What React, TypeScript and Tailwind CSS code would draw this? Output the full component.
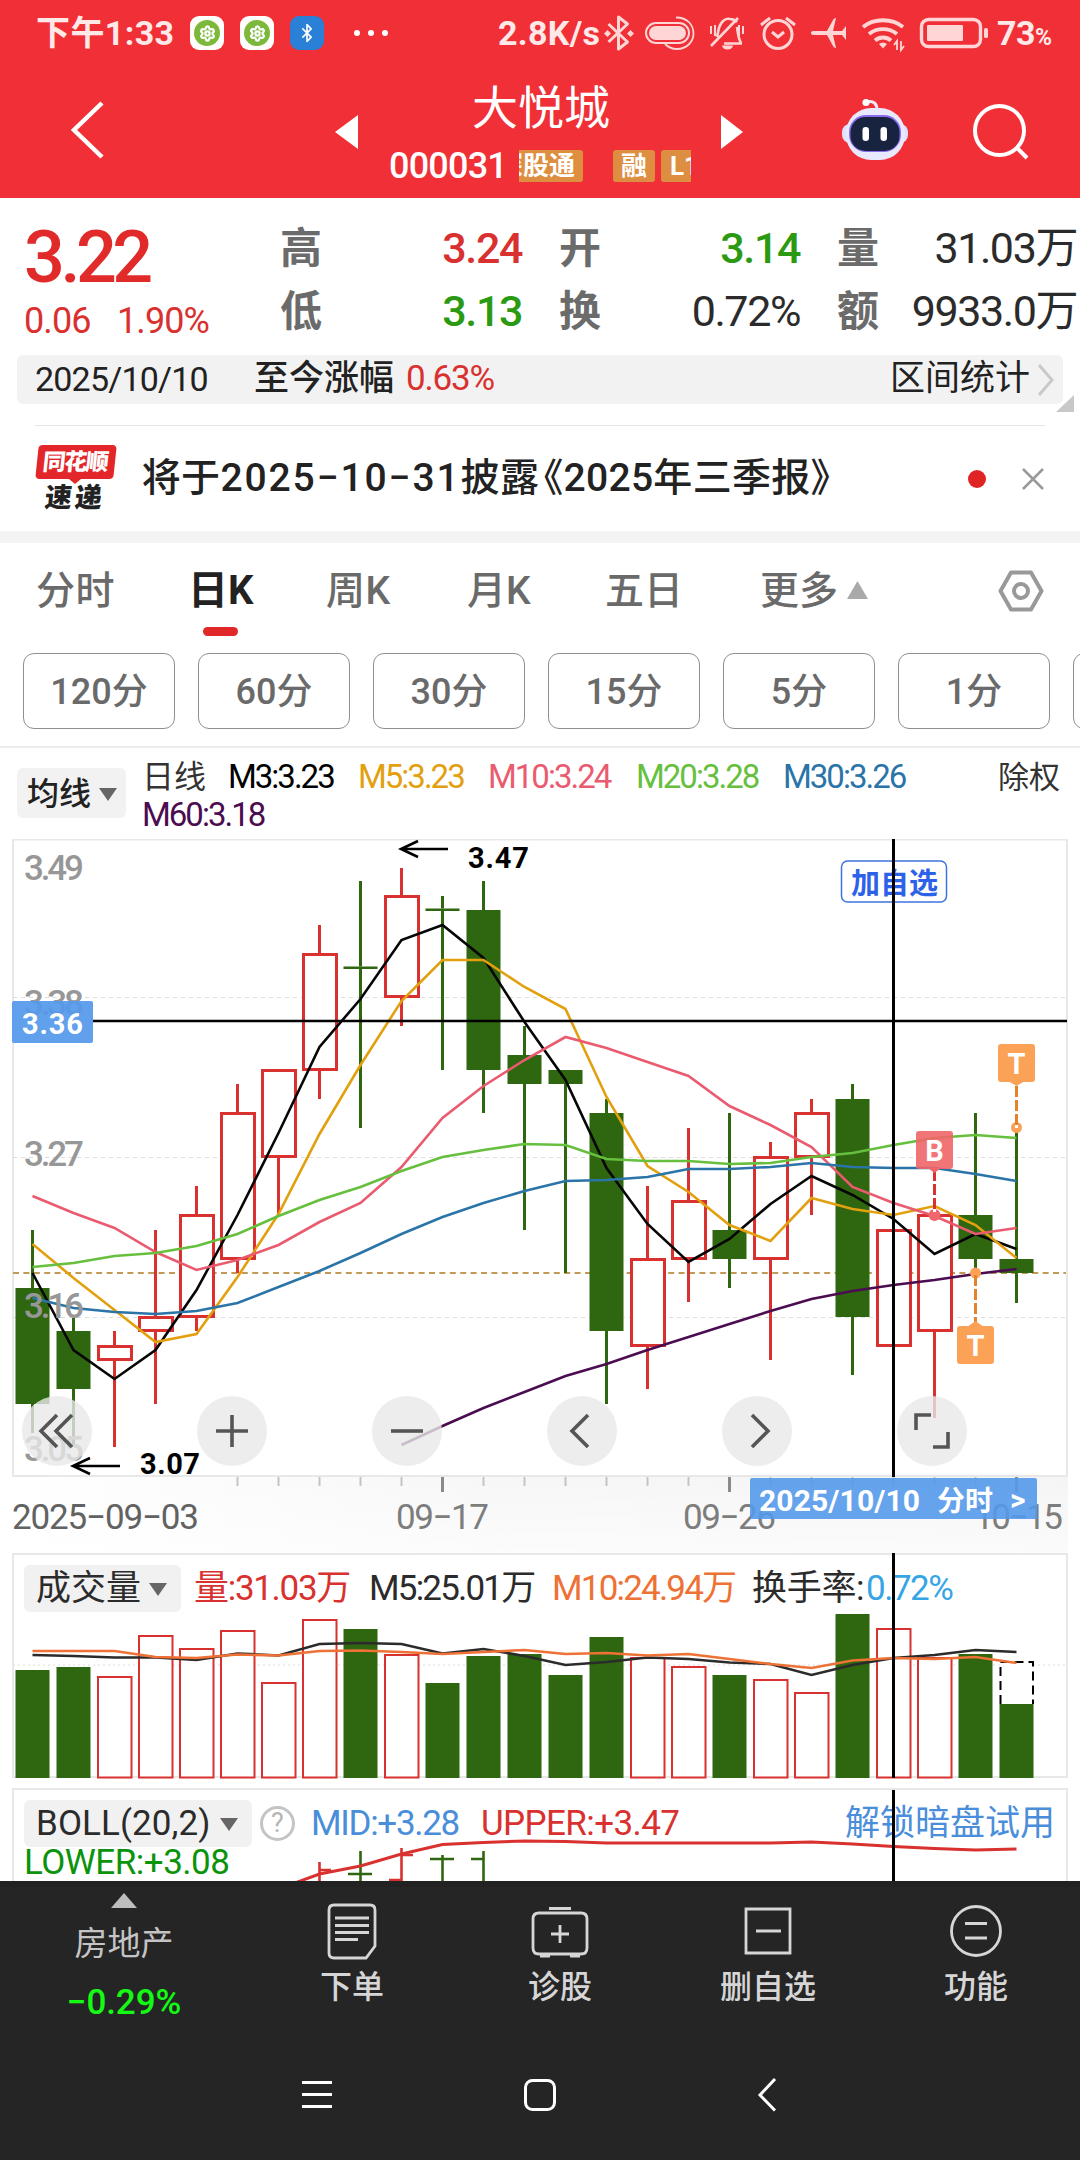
import { Bluetooth, Settings } from 'lucide-react';

const RED = '#d8312f';
const GREEN = '#2f6610';

// [up, high, bodyTop, bodyBottom, low]
const candles: [boolean, number, number, number, number][] = [
  [false, 1230, 1288, 1404, 1433],
  [false, 1318, 1331, 1389, 1447],
  [true, 1331, 1345, 1361, 1447],
  [true, 1230, 1316, 1332, 1404],
  [true, 1186, 1214, 1318, 1331],
  [true, 1084, 1112, 1260, 1273],
  [true, 1069, 1069, 1158, 1215],
  [true, 925, 953, 1071, 1099],
  [false, 881, 966.5, 969, 1128],
  [true, 868, 895, 998, 1026],
  [false, 896, 908.5, 911, 1070],
  [false, 881, 910, 1070, 1113],
  [false, 1026, 1055, 1084, 1230],
  [false, 1070, 1070, 1084, 1273],
  [false, 1099, 1113, 1331, 1404],
  [true, 1186, 1258, 1347, 1389],
  [true, 1128, 1200, 1260, 1302],
  [false, 1113, 1230, 1259, 1288],
  [true, 1142, 1156, 1260, 1360],
  [true, 1099, 1112, 1158, 1215],
  [false, 1084, 1099, 1317, 1375],
  [true, 1229, 1229, 1347, 1347],
  [true, 1214, 1214, 1332, 1418],
  [false, 1113, 1215, 1259, 1273],
  [false, 1128, 1259, 1273, 1303],
];

const averages = [
  { color: '#4b0c50', start: 9, ys: [1445, 1426, 1408, 1392, 1376, 1364, 1350, 1337, 1324, 1311, 1299, 1291, 1285, 1280, 1274, 1269] },
  { color: '#060606', start: 0, ys: [1273, 1350, 1379, 1350, 1290, 1215, 1133, 1047, 999, 940, 925, 958, 1022, 1080, 1168, 1224, 1262, 1239, 1204, 1176, 1195, 1219, 1254, 1234, 1249] },
  { color: '#e2a00f', start: 0, ys: [1244, 1278, 1310, 1342, 1334, 1277, 1214, 1134, 1065, 1001, 960, 960, 987, 1009, 1097, 1166, 1192, 1225, 1241, 1198, 1209, 1215, 1206, 1225, 1258] },
  { color: '#ea5b70', start: 0, ys: [1196, 1213, 1228, 1252, 1270, 1260, 1245, 1222, 1203, 1167, 1118, 1086, 1060, 1037, 1048, 1062, 1076, 1106, 1125, 1147, 1187, 1203, 1216, 1234, 1228] },
  { color: '#66bf3d', start: 0, ys: [1267, 1263, 1256, 1253, 1246, 1234, 1216, 1200, 1187, 1171, 1157, 1150, 1144, 1145, 1159, 1161, 1161, 1164, 1163, 1157, 1153, 1145, 1138, 1135, 1138] },
  { color: '#2a74a8', start: 0, ys: [1298, 1308, 1312, 1314, 1311, 1303, 1287, 1271, 1253, 1234, 1217, 1203, 1191, 1181, 1180, 1177, 1169, 1169, 1167, 1163, 1167, 1168, 1168, 1174, 1181] },
];

const volumes = [
  [0, 1670], [0, 1667], [1, 1676], [1, 1635], [1, 1648], [1, 1630], [1, 1682], [1, 1619], [0, 1629],
  [1, 1654], [0, 1683], [0, 1656], [0, 1654], [0, 1675], [0, 1637], [1, 1657], [1, 1666], [0, 1675],
  [1, 1679], [1, 1692], [0, 1614], [1, 1628], [1, 1657], [0, 1654], [0, 1704],
];
const volumeM5 = [1655, 1656, 1657.5, 1657.5, 1660, 1653.5, 1655.5, 1644, 1643, 1644, 1653.5, 1649, 1656, 1665, 1662, 1657.5, 1659, 1662.5, 1664, 1675, 1665, 1658, 1655, 1650, 1652];
const volumeM10 = [1651, 1651, 1651, 1657, 1658, 1654.5, 1655.5, 1651, 1650.5, 1652, 1654, 1652, 1650, 1654, 1653, 1655.5, 1654, 1659, 1664, 1668, 1660.5, 1658, 1659, 1657, 1663];
const bollUpper = [1890, 1875, 1867, 1855, 1845.5, 1843.5, 1842, 1842.5, 1844, 1844, 1844, 1844, 1844, 1843, 1845, 1847.5, 1849.5, 1851, 1850];

const x = (i: number) => 32.5 + i * 41;
const line = (ys: number[], start = 0) => ys.map((y, i) => `${x(start + i)},${y}`).join(' ');

const periods = ['120分', '60分', '30分', '15分', '5分', '1分'];

const GearTile = () => (
  <div className="flex h-[34px] w-[34px] items-center justify-center rounded-[9px] bg-white">
    <div className="flex h-[26px] w-[26px] items-center justify-center rounded-full bg-[#7cb93a]">
      <Settings className="h-[17px] w-[17px] text-white" strokeWidth={3.2} />
    </div>
  </div>
);

const StatusBar = () => (
  <div className="flex h-[66px] items-center pl-[36px] text-[#ffe9e8]">
    <span className="w-[154px] whitespace-nowrap text-[34px] font-bold tracking-[0.4px]">下午1:33</span>
    <GearTile />
    <div className="w-4" />
    <GearTile />
    <div className="ml-4 flex h-[34px] w-[34px] items-center justify-center rounded-[9px] bg-[#2a7fd6]">
      <Bluetooth className="h-[20px] w-[20px] text-white" strokeWidth={2} />
    </div>
    <div className="ml-[30px] flex w-[144px] gap-2">
      <i className="h-[6px] w-[6px] rounded-full bg-white" />
      <i className="h-[6px] w-[6px] rounded-full bg-white" />
      <i className="h-[6px] w-[6px] rounded-full bg-white" />
    </div>
    <span className="w-[106px] whitespace-nowrap text-[34px] font-bold tracking-[0.3px]">2.8K/s</span>
    <svg width="446" height="66" viewBox="604 0 446 66" fill="none" stroke="#ffd6d5" strokeWidth="3">
      <path d="M608.500 24l19 18-9 7V17l9 7-19 18" strokeLinejoin="round" />
      <path d="M604 33.500l3.500-3.500 3.500 3.500-3.500 3.500zM627 33.500l3.500-3.500 3.500 3.500-3.500 3.500z" fill="#ffd6d5" stroke="none" />
      <rect x="646" y="23" width="43" height="20" rx="10" strokeWidth="2" />
      <rect x="649" y="26" width="37" height="14" rx="7" fill="#ffd6d5" stroke="none" />
      <path d="M676 17.500c12 0 17.500 8 17.500 16S687 49 677 49c-6 0-10-3-12-5" strokeWidth="1.800" />
      <path d="M717 37c1-3 1-6 2-9 2-7 7-10 11-9 3 0 5 1 7 3M737 27c1 6 1 11 4 16M724 43.500h18M711 46l27-28" strokeWidth="2.600" />
      <path d="M722 45.500h11a5.500 4 0 0 1-11 0z" fill="#ffd6d5" stroke="none" />
      <path d="M711 26v8M715 25v11M739 25v11M743 26v8" strokeWidth="2" />
      <circle cx="778" cy="34.500" r="14" />
      <path d="M772 32l6 5 6-5M761 25l9-7M795 25l-9-7" />
      <path d="M811 33c0-1.500 1-2 3-2h13l6-11c1-2 3-2 3-2l-3 13h9l4-5v14l-4-5h-9l3 13s-2 0-3-2l-6-11h-13c-2 0-3-.500-3-2z" fill="#ffd6d5" stroke="none" />
      <path d="M863 27c11-9 29-9 40 0M869 34c8-6.500 20-6.500 28 0M875 40.500c4.500-4 11.500-4 16 0" strokeWidth="3.800" />
      <path d="M879 44a6 6 0 0 1 8 0l-4 4.500z" fill="#ffd6d5" stroke="none" />
      <path d="M897 50v-9l-3 4M901 41v9l3-4" strokeWidth="1.800" />
      <rect x="921.500" y="19.500" width="59" height="27" rx="7" strokeWidth="3.400" />
      <rect x="927" y="25" width="36" height="16" rx="1" fill="#ffd6d5" stroke="none" />
      <rect x="984" y="28" width="4" height="10" rx="1.500" fill="#ffd6d5" stroke="none" />
    </svg>
    <span className="-ml-[53px] whitespace-nowrap text-[34px] font-bold tracking-[-0.5px]">
      73<span className="text-[23px]">%</span>
    </span>
  </div>
);

const Header = () => (
  <header className="h-[198px] bg-[#f02f36]">
    <StatusBar />
    <div className="flex h-[132px] items-start text-white">
      <svg className="ml-[68px] mt-[34px]" width="40" height="60" fill="none" stroke="#fff" strokeWidth="4.500">
        <path d="M34 3L6 30L34 57" />
      </svg>
      <svg className="ml-[227px] mt-[49px]" width="24" height="34" fill="#fff"><path d="M23 0v34L0 17z" /></svg>
      <div className="ml-[30px] flex w-[304px] flex-col items-center">
        <div className="mt-[14px] h-[56px] w-[304px] text-center text-[46px] leading-[56px]">大悦城</div>
        <div className="mt-[12px] flex h-9 w-[304px] items-center">
          <span className="w-[130px] text-[36px] font-medium leading-[36px] tracking-[-0.8px]">000031</span>
          <div className="flex h-[32px] w-[172px] justify-end gap-[6px] overflow-hidden text-[26px] font-bold leading-[32px]">
            <span className="flex h-[32px] w-[64px] shrink-0 justify-end overflow-hidden rounded-r-[3px] bg-[#dd8e41] pr-[8px] whitespace-nowrap">深股通</span>
            <span className="ml-6 h-[32px] w-[42px] shrink-0 rounded-[3px] bg-[#dd8e41] text-center">融</span>
            <span className="h-[32px] w-[30px] shrink-0 overflow-hidden rounded-l-[3px] bg-[#dd8e41] pl-[9px]">L1</span>
          </div>
        </div>
      </div>
      <svg className="ml-[28px] mt-[49px]" width="24" height="34" fill="#fff"><path d="M0 0v34L22 17z" /></svg>
      <svg className="ml-[95px] mt-[32px]" width="70" height="64" viewBox="840 98 70 64">
        <path d="M866 102c8-2 11 2 11 8" fill="none" stroke="#f6e8f6" strokeWidth="3" />
        <circle cx="866" cy="102.500" r="3.600" fill="#fff" />
        <rect x="842" y="124" width="66" height="19" rx="8" fill="#dfe0fb" />
        <rect x="846" y="108" width="59" height="52" rx="25" fill="#e9e9fd" />
        <rect x="849" y="115" width="52" height="37" rx="17" fill="#8a6bf0" />
        <rect x="850.500" y="117" width="49" height="34" rx="15" fill="#18233f" />
        <rect x="862.500" y="127" width="6.500" height="14" rx="3.200" fill="#fff" />
        <rect x="880.500" y="127" width="6.500" height="14" rx="3.200" fill="#fff" />
      </svg>
      <svg className="ml-[60px] mt-[35px]" width="64" height="62" fill="none" stroke="#fff" strokeWidth="4">
        <circle cx="29.500" cy="29.500" r="24.500" />
        <path d="M46 46l11 11" />
      </svg>
    </div>
  </header>
);

const Stat = ({ label, value, color }: { label: string; value: string; color: string }) => (
  <div className="flex items-center justify-between whitespace-nowrap">
    <span className="text-[42px] font-bold text-[#6b6b6b]">{label}</span>
    <span className={`text-[43px] tracking-[-1.4px] ${color}`}>{value}</span>
  </div>
);

const Quote = () => (
  <section className="h-[228px]">
    <div className="flex h-[157px]">
      <div className="w-[280px] pl-[24px]">
        <div className="mt-[24px] h-[72px] text-[72px] font-medium leading-[72px] tracking-[-4.5px] text-[#e12b2b]">3.22</div>
        <div className="mt-[8px] flex text-[36px] leading-[38px] tracking-[-0.9px] text-[#d8312f]">
          <span className="w-[93px]">0.06</span>
          <span>1.90%</span>
        </div>
      </div>
      <div className="mt-[19px] grid h-[126px] w-[798px] grid-cols-[242px_241px_240px] grid-rows-2 gap-x-[37px] font-medium">
        <Stat label="高" value="3.24" color="text-[#d8312f]" />
        <Stat label="开" value="3.14" color="text-[#2b9a12]" />
        <Stat label="量" value="31.03万" color="text-[#2b2b2b] font-normal" />
        <Stat label="低" value="3.13" color="text-[#2b9a12]" />
        <Stat label="换" value="0.72%" color="text-[#2b2b2b] font-normal" />
        <Stat label="额" value="9933.0万" color="text-[#2b2b2b] font-normal" />
      </div>
    </div>
    <div className="ml-[17px] flex h-[49px] w-[1046px] items-center rounded-[6px] bg-[#f2f2f2] pl-[18px] text-[34px] text-[#222]">
      <span className="w-[219px] tracking-[-0.8px]">2025/10/10</span>
      <span className="w-[152px] text-[35px] font-medium">至今涨幅</span>
      <span className="w-[484px] text-[35px] tracking-[-1.2px] text-[#d8312f]">0.63%</span>
      <span className="w-[140px] whitespace-nowrap text-[35px]">区间统计</span>
      <svg className="ml-[6px]" width="20" height="36" fill="none" stroke="#c9c9c9" strokeWidth="3"><path d="M3 3l13 15L3 33" /></svg>
    </div>
    <svg className="-mt-[9px] ml-[1056px]" width="18" height="17" fill="#c8c8c8"><path d="M18 0v17H0z" /></svg>
  </section>
);

const News = () => (
  <section className="flex h-[105px] items-center px-[35px]">
    <div className="-mt-px flex w-[107px] flex-col">
      <div className="ml-[2px] flex h-[34px] w-[78px] -skew-x-6 items-center justify-center rounded-[4px] bg-[#e2262a] pr-[2px] text-[23px] font-black leading-none tracking-[-1.5px] text-white">
        同花顺
      </div>
      <svg className="ml-[34px]" width="12" height="5" fill="#e2262a"><path d="M0 0h12L6 5z" /></svg>
      <div className="ml-[10px] -skew-x-6 text-[27px] font-black leading-[28px] tracking-[3px] text-[#222]">速递</div>
    </div>
    <span className="w-[828px] whitespace-nowrap text-[39px] font-medium tracking-[0.3px] text-[#222]">
      将于<span className="tracking-[1.9px]">2025−10−31</span>披露
      <span className="-ml-[15px]">《2025年三季报》</span>
    </span>
    <i className="h-[18px] w-[18px] shrink-0 rounded-full bg-[#e02424]" />
    <svg className="ml-[35px] shrink-0" width="24" height="24" fill="none" stroke="#999" strokeWidth="2.500"><path d="M2 2l20 20M22 2L2 22" /></svg>
  </section>
);

const Tabs = () => (
  <nav className="flex h-[110px] items-start whitespace-nowrap pl-[36px] pt-[23px] text-[39px] font-medium leading-[50px] text-[#6a6a6a]">
    <span className="w-[152px] tracking-[0.6px]">分时</span>
    <span className="flex w-[138px] flex-col font-bold text-[#222]">
      <span className="text-[40px]">日K</span>
      <i className="ml-[15px] mt-[11px] h-[9px] w-[35px] rounded-full bg-[#e02828]" />
    </span>
    <span className="w-[141px] tracking-[0.6px]">周K</span>
    <span className="w-[138px]">月K</span>
    <span className="w-[155px]">五日</span>
    <span className="w-[87px]">更多</span>
    <svg className="mt-[15px]" width="21" height="18" fill="#a9a9a9"><path d="M10.500 0l10.500 18H0z" /></svg>
    <svg className="ml-[129px]" width="48" height="50" viewBox="0 0 48 50" fill="none" stroke="#999" strokeWidth="4">
      <path d="M14 6.500h20L44.500 25 34 43.500H14L3.500 25z" strokeLinejoin="round" />
      <circle cx="24" cy="25" r="7" />
    </svg>
  </nav>
);

const Periods = () => (
  <div className="flex h-[95px] gap-[23px] overflow-hidden border-b-2 border-[#ececec] pl-[23px]">
    {periods.map((p) => (
      <div key={p} className="flex h-[76px] w-[152px] shrink-0 items-center justify-center rounded-[11px] border border-[#8f8f8f] pt-[2px] text-[36px] font-medium text-[#6a6a6a]">
        {p}
      </div>
    ))}
    <div className="h-[76px] w-[152px] shrink-0 rounded-[11px] border border-[#8f8f8f]" />
  </div>
);

const Down = () => <svg width="18" height="13" fill="#666"><path d="M0 0h18L9 13z" /></svg>;

const Legend = () => (
  <div className="flex h-[91px] pl-[17px] text-[33px] leading-[38px]">
    <div className="mt-[20px] flex h-[50px] w-[109px] items-center gap-[8px] rounded-[6px] bg-[#f2f2f2] pl-[10px] pt-[2px] text-[32px] font-medium text-[#222]">
      均线<Down />
    </div>
    <div className="ml-[16px] mt-[10px] w-[856px] whitespace-nowrap tracking-[-2px]">
      <div className="flex h-[38px]">
        <span className="w-[86px] text-[32px] tracking-normal text-[#333]">日线</span>
        <span className="w-[130px] text-black">M3:3.23</span>
        <span className="w-[130px] text-[#e2a00f]">M5:3.23</span>
        <span className="w-[148px] text-[#ea5b70]">M10:3.24</span>
        <span className="w-[147px] text-[#66bf3d]">M20:3.28</span>
        <span className="text-[#2a74a8]">M30:3.26</span>
      </div>
      <div className="text-[#4b0c50]">M60:3.18</div>
    </div>
    <span className="mt-[11px] whitespace-nowrap text-[31px] text-[#333]">除权</span>
  </div>
);

const Marker = ({ cx, top, letter, color }: { cx: number; top: number; letter: string; color: string }) => (
  <g>
    <rect x={cx - 18.500} y={top} width="37" height="38" rx="3" fill={color} />
    <text x={cx} y={top + 29.500} textAnchor="middle" fontSize="29" fontWeight="700" fill="#fff">{letter}</text>
  </g>
);

const Stem = ({ cx, from, to, color }: { cx: number; from: number; to: number; color: string }) => (
  <g strokeWidth="3">
    <path d={`M${cx} ${from}V${to}`} stroke="#fff" />
    <path d={`M${cx} ${from}V${to}`} stroke={color} strokeDasharray="11 3" />
  </g>
);

const Round = ({ cx, d }: { cx: number; d: string }) => (
  <g>
    <circle cx={cx} cy="1431" r="35" fill="#e9e9e9" opacity="0.8" />
    <path d={d} transform={`translate(${cx} 1431)`} fill="none" stroke="#555" strokeWidth="3.600" />
  </g>
);

const PriceChart = () => (
  <svg className="block" width="1080" height="714" viewBox="0 839 1080 714">
    <defs>
      <linearGradient id="axis" x1="0" x2="1" y1="0" y2="0">
        <stop offset="0" stopColor="#fff" />
        <stop offset="0.450" stopColor="#f7f7f7" />
        <stop offset="1" stopColor="#f5f5f5" />
      </linearGradient>
      <linearGradient id="axisFade" x1="0" x2="0" y1="0" y2="1">
        <stop offset="0" stopColor="#fff" stopOpacity="0" />
        <stop offset="1" stopColor="#fff" stopOpacity="0.600" />
      </linearGradient>
    </defs>
    <rect x="13" y="1477" width="1055" height="76" fill="url(#axis)" />
    <rect x="13" y="1477" width="1055" height="76" fill="url(#axisFade)" />
    <rect x="13" y="839.500" width="1054" height="636.500" fill="none" stroke="#e8e8e8" strokeWidth="2" />
    {[997.5, 1157.5, 1317.5].map((y) => (
      <path key={y} d={`M13 ${y}H1066`} stroke="#dcdcdc" strokeDasharray="4 4" />
    ))}
    <path d="M13 1273H1066" stroke="#c29a55" strokeWidth="1.800" strokeDasharray="6 4.400" />

    {candles.map(([up, high, top, bottom, low], i) => (
      <g key={i} stroke={up ? RED : GREEN}>
        <path d={`M${x(i)} ${high}V${top}M${x(i)} ${bottom}V${low}`} strokeWidth="3" />
        {up ? (
          <rect x={x(i) - 16} y={top + 1.5} width="33" height={bottom - top - 3} fill="#fff" strokeWidth="3" />
        ) : (
          <rect x={x(i) - 17} y={top} width="34" height={bottom - top} fill={GREEN} stroke="none" />
        )}
      </g>
    ))}

    {averages.map((ma) => (
      <polyline key={ma.color} points={line(ma.ys, ma.start)} fill="none" stroke={ma.color} strokeWidth="2.600" />
    ))}

    <g fontSize="35" fill="#979797" fontWeight="500">
      <text x="24" y="880" textLength="60">3.49</text>
      <text x="24" y="1015" textLength="60">3.38</text>
      <text x="24" y="1166" textLength="60">3.27</text>
      <text x="24" y="1318" textLength="60">3.16</text>
      <text x="24" y="1461" textLength="60">3.05</text>
    </g>

    {/* extremes */}
    <g fill="none" stroke="#000" strokeWidth="2.600">
      <path d="M448 849H401M418 841L401 849L418 857" />
      <path d="M120 1466H73M90 1458L73 1466L90 1474" />
    </g>
    <g fontSize="29" fontWeight="700">
      <text x="468" y="868" textLength="61">3.47</text>
      <text x="140" y="1474" textLength="60">3.07</text>
    </g>

    {/* trade markers */}
    <circle cx="934.500" cy="1215" r="6" fill="#f0676c" />
    <Stem cx={934.5} from={1170} to={1212} color={RED} />
    <path d="M928 1168h13l-6.500 5z" fill="#ef6568" />
    <Marker cx={934.5} top={1131} letter="B" color="#ef6568e6" />
    <circle cx="975.500" cy="1273" r="5.500" fill="#fba257" />
    <Stem cx={975.5} from={1275} to={1322} color="#e5832c" />
    <path d="M967 1327l8.500-6 8.500 6z" fill="#fba257" />
    <Marker cx={975.5} top={1326} letter="T" color="#fba257" />
    <circle cx="1016.500" cy="1127.500" r="5.500" fill="#fba257" />
    <Stem cx={1016.5} from={1086} to={1128} color="#e5832c" />
    <path d="M1008 1081h17l-8.500 5z" fill="#fba257" />
    <Marker cx={1016.5} top={1044} letter="T" color="#fba257" />

    <rect x="841.500" y="861" width="105" height="41" rx="6" fill="#fff" stroke="#3f74de" strokeWidth="1.500" />
    <text x="851" y="894" fontSize="29" fontWeight="700" fill="#2d62e8" textLength="87">加自选</text>

    <Round cx={57} d="M0-16L-16 0L0 16M15-16L-1 0L15 16" />
    <Round cx={232} d="M-16 0H16M0-16V16" />
    <Round cx={407} d="M-16 0H16" />
    <Round cx={582} d="M6-16L-10 0L6 16" />
    <Round cx={757} d="M-5-16L11 0L-5 16" />
    <Round cx={932} d="M-1-16H-16V-1M1 16H16V1" />

    <path d="M93 1021H1067" stroke="#000" strokeWidth="2.600" />
    <path d="M893.500 838V1477" stroke="#000" strokeWidth="3" />
    <rect x="12" y="1001" width="81" height="42" rx="2" fill="#5599eb" opacity="0.930" />
    <text x="22" y="1034" fontSize="29" fontWeight="700" fill="#fff" textLength="61">3.36</text>

    {Array.from({ length: 20 }, (_, k) => k + 5).map((i) => {
      const major = i === 10 || i === 17 || i === 24;
      return <path key={i} d={`M${x(i)} 1477V${major ? 1492 : 1486}`} stroke={major ? '#8a8a8a' : '#c4c4c4'} strokeWidth={major ? 3 : 2} />;
    })}
    <g fontSize="35" fill="#7d7d7d">
      <text x="12" y="1529" fill="#626262" textLength="187">2025−09−03</text>
      <text x="396" y="1529" textLength="93">09−17</text>
      <text x="683" y="1529" textLength="93">09−26</text>
      <text x="974" y="1529" textLength="89">10−15</text>
    </g>
    <rect x="750" y="1478" width="287" height="41" rx="2" fill="#5599eb" opacity="0.900" />
    <g fontSize="30" fontWeight="700" fill="#fff">
      <text x="759" y="1511" textLength="161">2025/10/10</text>
      <text x="937" y="1511" fontSize="28" textLength="56">分时</text>
      <text x="1010" y="1510">&gt;</text>
    </g>
  </svg>
);

const Volume = () => (
  <section className="relative ml-[12px] h-[225px] w-[1056px] border-2 border-[#e8e8e8]">
    <div className="mt-[10px] flex h-[47px] items-center whitespace-nowrap pl-[10px] text-[35px] tracking-[-1.8px] text-[#2b2b2b]">
      <div className="flex h-[47px] w-[157px] items-center gap-[8px] rounded-[6px] bg-[#f1f1f1] pl-[12px] pt-[2px] tracking-normal">
        成交量<Down />
      </div>
      <span className="ml-[13px] w-[175px] pt-[2px] tracking-[-1.3px] text-[#d8312f]">量:31.03万</span>
      <span className="w-[183px] pt-[2px]">M5:25.01万</span>
      <span className="w-[200px] pt-[2px] text-[#ee7135]">M10:24.94万</span>
      <span className="w-[114px] pt-[2px] tracking-[-0.3px]">换手率:</span>
      <span className="pt-[2px] tracking-[-1.5px] text-[#36a5e6]">0.72%</span>
    </div>
    <svg className="absolute -left-[14px] -top-[2px]" width="1080" height="226" viewBox="0 1553 1080 226">
      <path d="M13 1665H1066" stroke="#dcdcdc" strokeDasharray="2 3" />
      {volumes.map(([up, top], i) =>
        up ? (
          <rect key={i} x={x(i) - 16.5} y={top + 1} width="33.500" height={1777.5 - top - 1} fill="#fff" stroke={RED} strokeWidth="2" />
        ) : (
          <rect key={i} x={x(i) - 17} y={top} width="34" height={1778 - top} fill={GREEN} />
        )
      )}
      <path d="M1000.500 1704V1662H1033V1704" fill="#fff" stroke="#000" strokeWidth="2" strokeDasharray="9 5" />
      <polyline points={line(volumeM5)} fill="none" stroke="#2b2b2b" strokeWidth="2.600" />
      <polyline points={line(volumeM10)} fill="none" stroke="#ee7135" strokeWidth="2.600" />
      <path d="M893.500 1553V1778" stroke="#000" strokeWidth="3" />
    </svg>
  </section>
);

const Boll = () => (
  <section className="relative ml-[12px] mt-[10px] h-[93px] w-[1056px] overflow-hidden border-2 border-b-0 border-[#e8e8e8]">
    <div className="mt-[10px] flex h-[47px] items-center whitespace-nowrap pl-[10px] text-[35px] tracking-[-1.2px]">
      <div className="flex h-[47px] w-[228px] items-center justify-between rounded-[6px] bg-[#f1f1f1] pl-[12px] pr-[14px] pt-[2px] text-[#2b2b2b]">
        <span className="tracking-[0.1px]">BOLL(20,2)</span><Down />
      </div>
      <div className="ml-[8px] flex h-[35px] w-[35px] items-center justify-center rounded-full border-[3px] border-[#c4c4c4] text-[27px] tracking-normal text-[#b5b5b5]">?</div>
      <span className="ml-[16px] w-[170px] pt-[2px] tracking-[-1.3px] text-[#4a8edb]">MID:+3.28</span>
      <span className="w-[364px] pt-[2px] tracking-[-0.6px] text-[#d8312f]">UPPER:+3.47</span>
      <span className="pt-[2px] tracking-normal text-[#4a8edb]">解锁暗盘试用</span>
    </div>
    <div className="ml-[10px] mt-[-3px] h-[36px] text-[35px] leading-[38px] tracking-[-0.5px] text-[#0c930c]">LOWER:+3.08</div>
    <svg className="absolute -left-[14px] -top-[2px]" width="1080" height="93" viewBox="0 1789 1080 93" fill="none" strokeWidth="2.600">
      <path d="M319.500 1863V1882M319.500 1871H331M401.500 1849V1882M401.500 1856H413M389 1881H401" stroke={RED} />
      <path d="M360.500 1852V1882M348 1875H372M442.500 1856V1882M430 1860H454M483.500 1852V1882M471 1860H483" stroke={GREEN} />
      <polyline points={line(bollUpper, 6)} stroke={RED} strokeWidth="3" />
      <path d="M893.500 1789V1882" stroke="#000" strokeWidth="3" />
    </svg>
  </section>
);

const actions = [
  { label: '下单', d: 'M334 1905h36q5 0 5 5v36l-9 12h-32q-5 0-5-5v-43q0-5 5-5zM335 1918h34M335 1925.500h34M335 1932.500h34M335 1939.500h23', cx: 352 },
  { label: '诊股', d: 'M539 1913h42q6 0 6 6v29q0 6-6 6h-42q-6 0-6-6v-29q0-6 6-6zM549 1908.500h22M551 1934h18M560 1925v18M540 1956h10M570 1956h10', cx: 560 },
  { label: '删自选', d: 'M746 1909h44v44h-44zM756 1931h25', cx: 768 },
  { label: '功能', d: 'M951.500 1931a24.500 24.500 0 1 0 49 0a24.500 24.500 0 1 0-49 0M965 1923.500h22M965 1938h22', cx: 976 },
];

const BottomBar = () => (
  <footer className="h-[279px] bg-[#252525] text-[#d6d6d6]">
    <div className="flex h-[159px] border-t-[6px] border-[#222]">
      <div className="flex w-[248px] flex-col items-center pt-[6px]">
        <svg width="26" height="15" fill="#bdbdbd"><path d="M13 0l13 15H0z" /></svg>
        <span className="mt-[14px] text-[33px] leading-[44px] text-[#c4c4c4]">房地产</span>
        <span className="mt-[16px] text-[35px] font-medium leading-[42px] tracking-[-0.1px] text-[#14fa14]">−0.29%</span>
      </div>
      {actions.map((a) => (
        <div key={a.label} className="flex w-[208px] flex-col items-center pt-[10px]">
          <svg width="70" height="66" viewBox={`${a.cx - 35} 1897 70 66`} fill="none" stroke="#d6d6d6" strokeWidth="2.800">
            <path d={a.d} />
          </svg>
          <span className="mt-[2px] text-[32px] font-medium leading-[44px]">{a.label}</span>
        </div>
      ))}
    </div>
    <svg className="block" width="1080" height="120" viewBox="0 2040 1080 120" fill="none" stroke="#fff" strokeWidth="3">
      <path d="M302 2082.500H332M302 2094.500H332M302 2106.500H332" />
      <rect x="525.500" y="2080.500" width="29" height="29" rx="7" />
      <path d="M775 2079L760 2095L775 2110.500" />
    </svg>
  </footer>
);

export default function App() {
  return (
    <div className="h-[2160px] w-[1080px] overflow-hidden bg-white font-['Roboto','Noto_Sans_CJK_SC',sans-serif]">
      <Header />
      <Quote />
      <div className="mx-[35px] -mt-px h-px bg-[#e6e6e6]" />
      <News />
      <div className="h-3 bg-[#f3f3f3]" />
      <Tabs />
      <Periods />
      <Legend />
      <PriceChart />
      <Volume />
      <Boll />
      <BottomBar />
    </div>
  );
}
